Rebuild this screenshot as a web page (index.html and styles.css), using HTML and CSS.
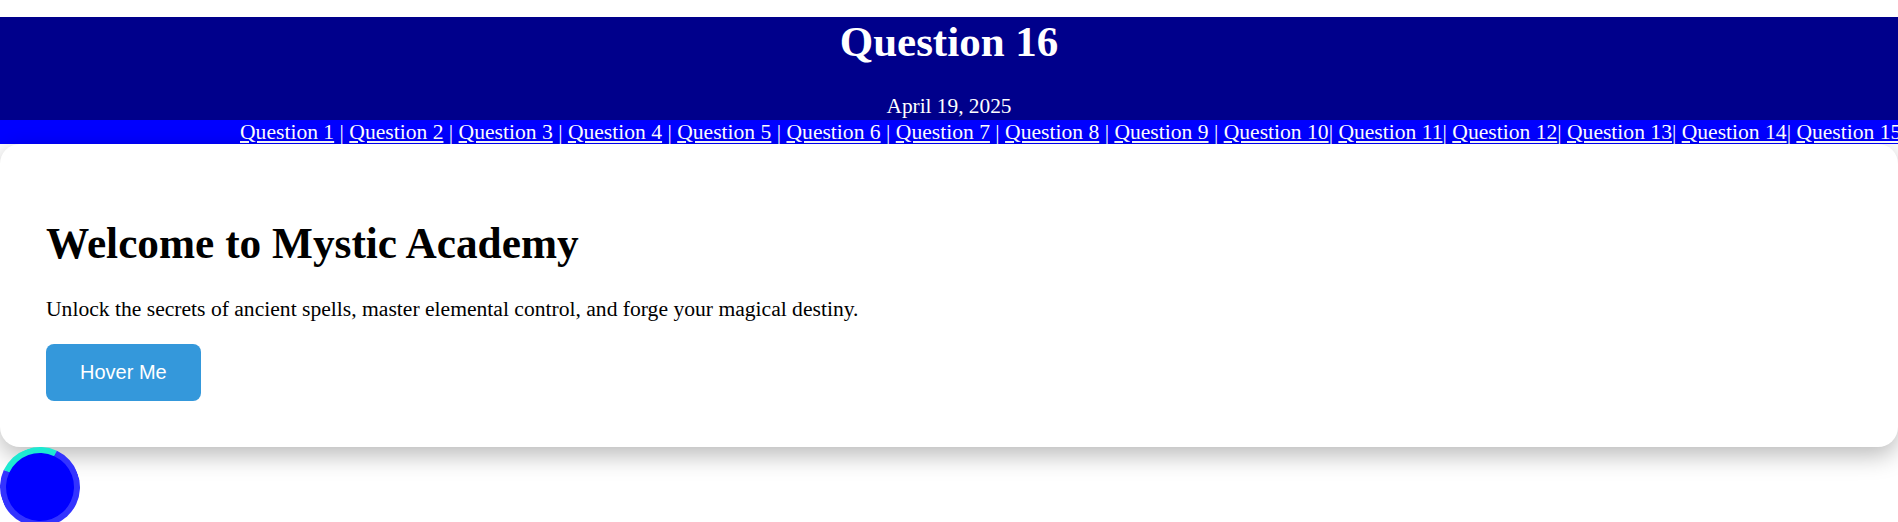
FILE: index.html
```html
<!DOCTYPE html>
<html lang="en">
<head>
<meta charset="utf-8">
<title>Question 16</title>
<link rel="stylesheet" href="styles.css">
</head>
<body>
<header class="site-header">
  <h1 class="site-title">Question 16</h1>
  <p class="site-date">April 19, 2025</p>
</header>
<nav class="question-nav"><a href="#">Question 1</a> | <a href="#">Question 2</a> | <a href="#">Question 3</a> | <a href="#">Question 4</a> | <a href="#">Question 5</a> | <a href="#">Question 6</a> | <a href="#">Question 7</a> | <a href="#">Question 8</a> | <a href="#">Question 9</a> | <a href="#">Question 10</a>| <a href="#">Question 11</a>| <a href="#">Question 12</a>| <a href="#">Question 13</a>| <a href="#">Question 14</a>| <a href="#">Question 15</a></nav>
<main class="card">
  <h1 class="card-title">Welcome to Mystic Academy</h1>
  <p class="card-text">Unlock the secrets of ancient spells, master elemental control, and forge your magical destiny.</p>
  <button class="hover-btn" type="button">Hover Me</button>
</main>
<div class="spinner"></div>
</body>
</html>
```
FILE: styles.css
```css
html, body {
  margin: 0;
  padding: 0;
  background: #ffffff;
}

body {
  font-family: "Liberation Serif", "Times New Roman", serif;
  font-size: 21.33px;
  color: #000000;
}

.site-header {
  margin-top: 17px;
  background: #00008b;
  color: #ffffff;
  text-align: center;
  padding: 1px 0 2px;
}

.site-title {
  margin: 0 0 29px;
  font-size: 43px;
  line-height: 47px;
  font-weight: bold;
}

.site-date {
  margin: 0;
  font-size: 21.33px;
  line-height: 24px;
}

.question-nav {
  background: #0000ff;
  color: #ffffff;
  height: 24px;
  line-height: 24px;
  font-size: 21.6px;
  padding-left: 240px;
  white-space: nowrap;
  overflow: hidden;
}

.question-nav a {
  color: #ffffff;
  text-decoration: underline;
}

.card {
  display: block;
  background: #ffffff;
  border-radius: 20px;
  padding: 46px;
  box-shadow: 0 8px 24px rgba(0, 0, 0, 0.28);
  position: relative;
}

.card-title {
  margin: 30px 0 30px;
  font-size: 43.3px;
  line-height: 47px;
  font-weight: bold;
}

.card-text {
  margin: 0 0 23px;
  font-size: 21.6px;
  line-height: 24px;
}

.hover-btn {
  display: block;
  background: #3498db;
  color: #ffffff;
  border: none;
  border-radius: 8px;
  padding: 17px 34px;
  font-family: "Liberation Sans", Arial, sans-serif;
  font-size: 20px;
  line-height: 23px;
  cursor: pointer;
}

.spinner {
  width: 68px;
  height: 68px;
  border: 6px solid #3333ff;
  border-top-color: #1de9d2;
  border-radius: 50%;
  background: #0000ff;
  transform: rotate(-20deg);
  position: relative;
}
```
